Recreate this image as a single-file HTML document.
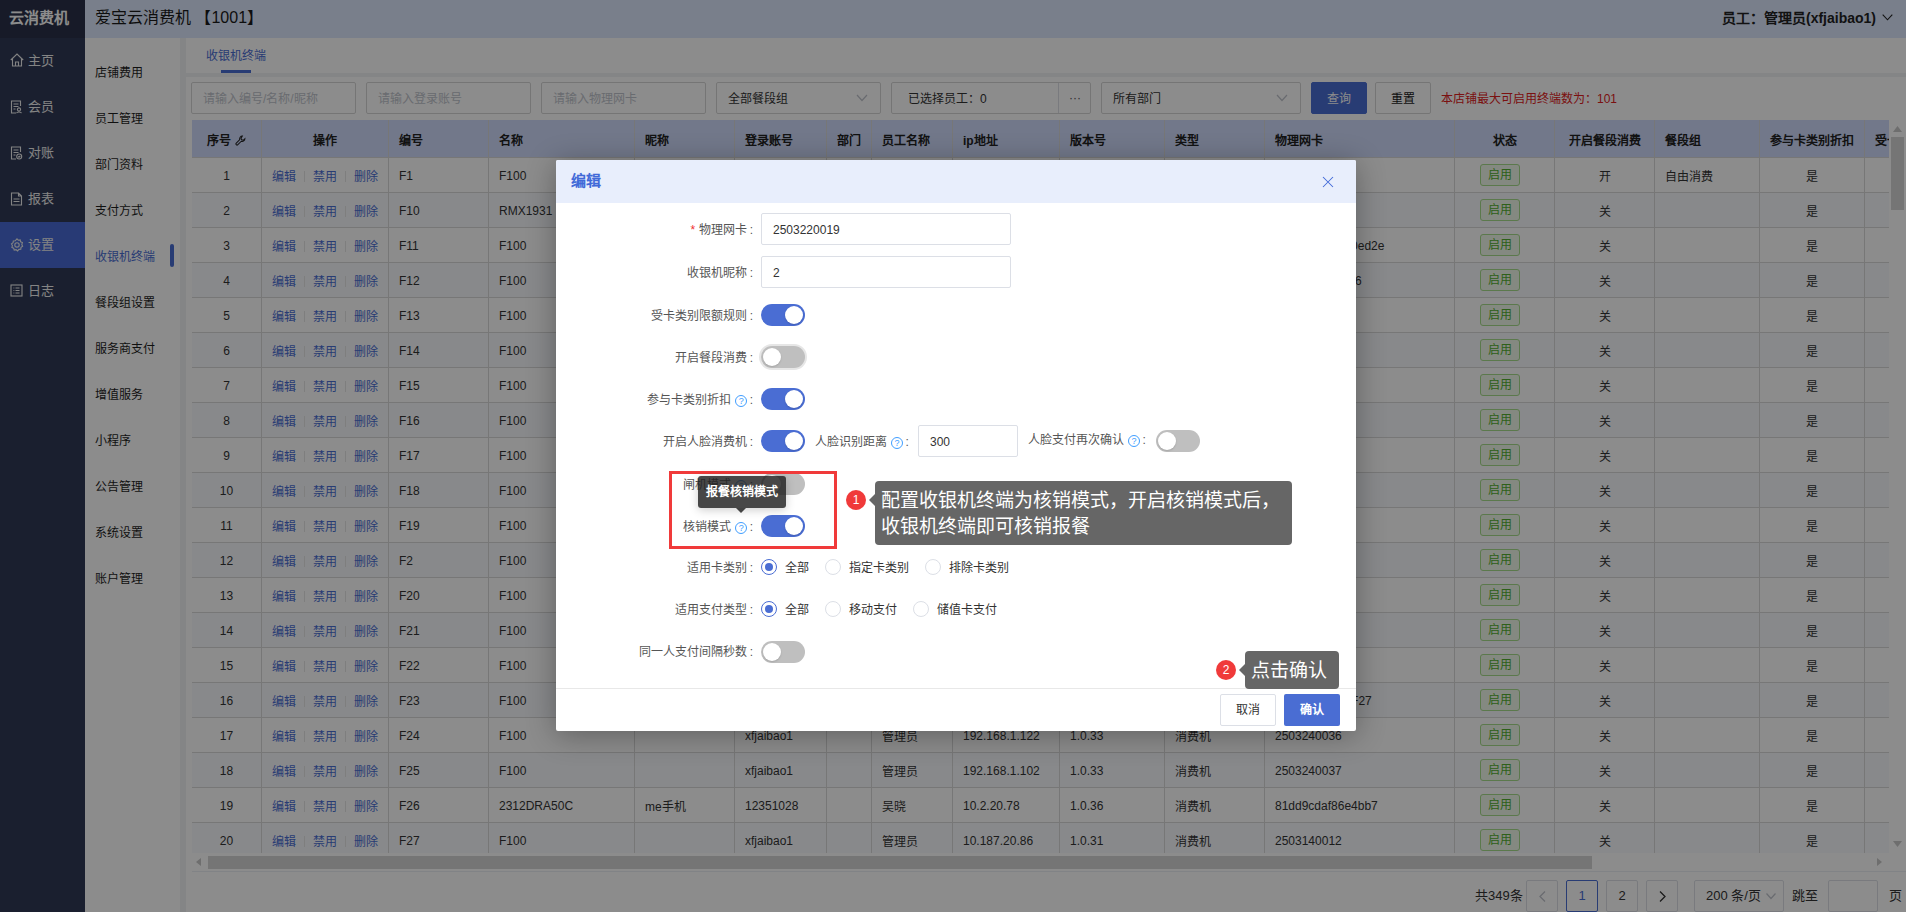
<!DOCTYPE html>
<html lang="zh-CN"><head><meta charset="utf-8">
<style>
*{box-sizing:border-box;margin:0;padding:0}
html,body{width:1906px;height:912px;overflow:hidden}
body{position:relative;font-family:"Liberation Sans",sans-serif;font-size:12px;color:#333;background:#fff}
.abs{position:absolute}
/* sidebar */
#side{position:absolute;left:0;top:0;width:85px;height:912px;background:#313a57}
#logo{position:absolute;left:0;top:0;width:85px;height:38px;background:#2a3149;color:#fff;font-size:15px;font-weight:bold;line-height:36px;padding-left:9px;letter-spacing:0}
.nav{position:absolute;left:0;width:85px;height:46px;color:#f0f0f0;font-size:13px;line-height:46px}
.nav svg{position:absolute;left:10px;top:16px}
.nav span{position:absolute;left:28px;top:0}
.nav.on{background:#496bd5}
/* header */
#hdr{position:absolute;left:85px;top:0;width:1821px;height:38px;background:#dce7fd}
#hdr .t{position:absolute;left:10px;top:0;line-height:36px;font-size:16px;color:#1a1a1a}
#hdr .u{position:absolute;right:30px;top:0;line-height:36px;font-size:14px;font-weight:bold;color:#222}
#hdr svg{position:absolute;left:1797px;top:14px}
/* submenu */
#sub{position:absolute;left:85px;top:38px;width:95px;height:874px;background:#fff}
.si{position:absolute;left:10px;margin-top:2px;font-size:12px;color:#1e1e1e;line-height:20px;height:20px}
.si.on{color:#4a6dd3}
#ind{position:absolute;left:85px;top:206px;width:4px;height:23px;border-radius:2px;background:#4a6dd3}
#sep{position:absolute;left:180px;top:38px;width:6px;height:874px;background:#f0f2f5}
/* content */
#tabs{position:absolute;left:186px;top:38px;width:1720px;height:35px;background:#fff}
#tabs .tt{position:absolute;left:20px;top:8px;font-size:12px;color:#4a6dd3;line-height:20px}
#tabs .ul{position:absolute;left:35px;top:32px;width:30px;height:3px;background:#4a6dd3}
#band{position:absolute;left:186px;top:73px;width:1720px;height:4px;background:#f0f2f5}
#panel{position:absolute;left:186px;top:77px;width:1720px;height:835px;background:#fff}
.inp{position:absolute;top:82px;height:32px;border:1px solid #d6d6d6;border-radius:2px;background:#fff;line-height:33px;padding-left:11px;font-size:12px;color:#c0c4cc}
.inp.v{color:#333}
.chev{position:absolute;right:12px;top:11px}
.btn{position:absolute;top:82px;height:32px;border-radius:2px;line-height:32px;text-align:center;font-size:12px}
#q{left:1311px;width:56px;background:#4a6dd3;color:#fff;border:1px solid #4a6dd3}
#r{left:1375px;width:56px;background:#fff;color:#1a1a1a;border:1px solid #d6d6d6}
#warn{position:absolute;left:1441px;top:89px;line-height:20px;font-size:12px;color:#e02020}
/* table */
#tbl{position:absolute;left:192px;top:120px;width:1697px;height:733px;overflow:hidden}
table{border-collapse:collapse;table-layout:fixed;width:1719.5px}
th{height:37px;padding-top:2px !important;background:#cfdafb;font-weight:bold;color:#222;font-size:12px;border:1px solid #d9d9d9;border-top:0;padding:0 10px;text-align:left;white-space:nowrap;overflow:hidden}
td{height:35px;border:1px solid #d9d9d9;padding:2px 10px 0;font-size:12px;color:#333;white-space:nowrap;overflow:hidden}
th:first-child,td:first-child{border-left:0}
.c{text-align:center}
tbody tr:nth-child(even) td{background:#f8fafe}
.op a{color:#4a6dd3;margin:0 0}
.op i{display:inline-block;width:1px;height:11px;background:#e6e6e6;margin:0 8px;vertical-align:-1px}
.tag{display:inline-block;position:relative;left:-5px;top:-1px;width:40px;height:22px;line-height:20px;border:1px solid #a6dc8a;background:#f0f9eb;color:#52b030;border-radius:3px;font-size:12px}
.wr{display:inline-block;vertical-align:-1px;margin-left:1px}
#hscroll{position:absolute;left:192px;top:855px;width:1697px;height:14px}
#hthumb{position:absolute;left:16px;top:1px;width:1384px;height:13px;background:#d6d6d6}
#hline{position:absolute;left:192px;top:871px;width:1714px;height:1px;background:#ebeef5}
#vscroll{position:absolute;left:1889px;top:121px;width:17px;height:733px}
#vthumb{position:absolute;left:2px;top:16px;width:13px;height:73px;background:#d6d6d6}
/* pagination */
.pg{position:absolute;top:880px;height:32px;border:1px solid #dcdfe6;border-radius:2px;background:#fff;line-height:30px;text-align:center;font-size:13px;color:#333}
.pt{position:absolute;top:886px;line-height:20px;font-size:13px;color:#333}
/* overlay */
#mask{position:absolute;left:0;top:0;width:1906px;height:912px;background:rgba(0,0,0,.45)}
/* modal */
#modal{position:absolute;left:556px;top:160px;width:800px;height:571px;background:#fff;border-radius:2px;box-shadow:0 4px 30px rgba(0,0,0,.32);overflow:hidden}
#mh{position:absolute;left:0;top:0;width:800px;height:43px;background:#e8eefc}
#mh .t{position:absolute;left:15px;top:11px;font-size:15px;font-weight:bold;color:#4169d8;line-height:20px}
#mh svg{position:absolute;left:766px;top:16px}
.lb{position:absolute;right:603px;margin-top:1px;font-size:12px;color:#555;line-height:20px;white-space:nowrap;text-align:right}
.lb b{color:#f03030;font-weight:normal;margin-right:4px}
.mi{position:absolute;height:32px;border:1px solid #dcdfe6;border-radius:2px;line-height:32px;padding-left:11px;font-size:12px;color:#333;background:#fff}
.sw{position:absolute;width:44px;height:22px;border-radius:11px;background:#bfbfbf}
.sw::after{content:"";position:absolute;top:2px;left:2px;width:18px;height:18px;border-radius:50%;background:#fff;box-shadow:0 1px 2px rgba(0,0,0,.15)}
.sw.on{background:#4a6dd3}
.sw.on::after{left:24px}
.sw.fo{box-shadow:0 0 0 2px #e6e6e6}
.qm{display:inline-block;width:12px;height:12px;border:1px solid #409eff;border-radius:50%;color:#409eff;font-size:9px;line-height:10px;text-align:center;vertical-align:0px;margin:0 0 0 4px}
.rd{position:absolute;width:16px;height:16px;border-radius:50%;border:1px solid #dcdfe6;background:#fff}
.rd.on{border-color:#4a6dd3}
.rd.on::after{content:"";position:absolute;left:3px;top:3px;width:8px;height:8px;border-radius:50%;background:#4a6dd3}
.rt{position:absolute;margin-top:1px;font-size:12px;color:#333;line-height:20px}
#mf{position:absolute;left:0;top:528px;width:800px;height:1px;background:#e8e8e8}
#cancel{position:absolute;left:664px;top:534px;width:56px;height:32px;border:1px solid #dcdfe6;border-radius:2px;line-height:30px;text-align:center;font-size:12px;color:#333;background:#fff}
#ok{position:absolute;left:728px;top:534px;width:56px;height:32px;border-radius:2px;line-height:32px;text-align:center;font-size:12px;color:#fff;background:#4a6dd3;font-weight:bold}
/* annotations */
#redbox{position:absolute;left:669px;top:471px;width:168px;height:78px;border:3px solid #f03a3a}
#tip1{position:absolute;left:698px;top:476px;width:88px;height:32px;background:rgba(30,30,30,.82);border-radius:3px;color:#fff;font-size:12px;font-weight:bold;line-height:33px;text-align:center;box-shadow:0 2px 10px rgba(0,0,0,.2)}
#tip1::after{content:"";position:absolute;left:38px;top:32px;border:5px solid transparent;border-top-color:rgba(30,30,30,.82)}
.badge{position:absolute;width:20px;height:20px;border-radius:50%;background:#f03a3a;color:#fff;font-size:12px;line-height:20px;text-align:center}
.gt{position:absolute;background:#666;border-radius:4px;color:#fff;font-size:19px;line-height:26px;white-space:nowrap}
.gt::before{content:"";position:absolute;left:-6px;top:13px;border:6px solid transparent;border-left:0;border-right-color:#666}
</style></head><body>

<div id="side">
  <div id="logo">云消费机</div>
  <div class="nav" style="top:38px"><svg width="14" height="14" viewBox="0 0 14 14" fill="none" stroke="#eee" stroke-width="1.1" style="top:15px"><path d="M0.8 7 L7 1 L13.2 7 M2.5 5.5 V13 H11.5 V5.5 M5.5 13 V9 H8.5 V13"/></svg><span>主页</span></div>
  <div class="nav" style="top:84px"><svg width="13" height="14" viewBox="0 0 13 14" fill="none" stroke="#eee" stroke-width="1.1"><path d="M10.5 6 V1 H1.5 V13 H6 M3.5 4 H8.5 M3.5 6.5 H8.5 M3.5 9 H5.5"/><circle cx="9" cy="9.5" r="1.6"/><path d="M6.5 13.2 C7 11.5 11 11.5 11.5 13.2"/></svg><span>会员</span></div>
  <div class="nav" style="top:130px"><svg width="13" height="14" viewBox="0 0 13 14" fill="none" stroke="#eee" stroke-width="1.1"><path d="M10.5 6 V1 H1.5 V13 H6 M3.5 4 H8.5 M3.5 6.5 H8.5 M3.5 9 H5.5"/><circle cx="9.2" cy="10.5" r="2.5"/><path d="M8.2 10.5 L9 11.3 L10.3 9.8"/></svg><span>对账</span></div>
  <div class="nav" style="top:176px"><svg width="13" height="14" viewBox="0 0 13 14" fill="none" stroke="#eee" stroke-width="1.1"><path d="M8.5 1 H1.5 V13 H11.5 V4 Z M8.5 1 V4 H11.5 M3.5 7 H9.5 M3.5 9.5 H9.5"/></svg><span>报表</span></div>
  <div class="nav on" style="top:222px"><svg width="14" height="14" viewBox="0 0 14 14" fill="none" stroke="#eee" stroke-width="1.1"><path d="M7 0.8 L8.3 2.2 L10.2 1.9 L10.6 3.8 L12.4 4.6 L11.8 6.5 L12.6 8.3 L11 9.4 L10.8 11.3 L8.9 11.4 L7.6 12.9 L6.1 11.7 L4.2 12.1 L3.7 10.2 L1.9 9.5 L2.4 7.6 L1.5 5.9 L3.1 4.8 L3.3 2.9 L5.2 2.8 Z"/><circle cx="7" cy="6.9" r="2.2"/></svg><span>设置</span></div>
  <div class="nav" style="top:268px"><svg width="13" height="13" viewBox="0 0 13 13" fill="none" stroke="#eee" stroke-width="1.1"><rect x="1" y="1" width="11" height="11"/><path d="M3.5 4 H4.3 M5.5 4 H9.5 M3.5 6.5 H4.3 M5.5 6.5 H9.5 M3.5 9 H4.3 M5.5 9 H9.5"/></svg><span>日志</span></div>
</div>

<div id="hdr">
  <div class="t">爱宝云消费机 【1001】</div>
  <div class="u">员工：管理员(xfjaibao1)</div>
  <svg width="11" height="7" viewBox="0 0 11 7" fill="none" stroke="#222" stroke-width="1.1"><path d="M0.7 0.7 L5.5 5.8 L10.3 0.7"/></svg>
</div>

<div id="sub">
  <div class="si" style="top:23px">店铺费用</div>
  <div class="si" style="top:69px">员工管理</div>
  <div class="si" style="top:115px">部门资料</div>
  <div class="si" style="top:161px">支付方式</div>
  <div class="si on" style="top:207px">收银机终端</div>
  <div class="si" style="top:253px">餐段组设置</div>
  <div class="si" style="top:299px">服务商支付</div>
  <div class="si" style="top:345px">增值服务</div>
  <div class="si" style="top:391px">小程序</div>
  <div class="si" style="top:437px">公告管理</div>
  <div class="si" style="top:483px">系统设置</div>
  <div class="si" style="top:529px">账户管理</div>
  <div id="ind"></div>
</div>
<div id="sep"></div>

<div id="tabs"><div class="tt">收银机终端</div><div class="ul"></div></div>
<div id="band"></div>
<div id="panel"></div>

<div class="inp" style="left:191px;width:165px">请输入编号/名称/昵称</div>
<div class="inp" style="left:366px;width:165px">请输入登录账号</div>
<div class="inp" style="left:541px;width:165px">请输入物理网卡</div>
<div class="inp v" style="left:716px;width:165px">全部餐段组<svg class="chev" width="12" height="8" viewBox="0 0 12 8" fill="none" stroke="#c0c4cc" stroke-width="1.2"><path d="M1 1 L6 6.5 L11 1"/></svg></div>
<div class="inp v" style="left:891px;width:200px;padding-left:16px">已选择员工：0<div style="position:absolute;left:166px;top:0;width:1px;height:30px;background:#dcdfe6"></div><div style="position:absolute;left:167px;top:-1px;width:32px;text-align:center;color:#555;font-size:12px">···</div></div>
<div class="inp v" style="left:1101px;width:200px">所有部门<svg class="chev" width="12" height="8" viewBox="0 0 12 8" fill="none" stroke="#c0c4cc" stroke-width="1.2"><path d="M1 1 L6 6.5 L11 1"/></svg></div>
<div class="btn" id="q">查询</div>
<div class="btn" id="r">重置</div>
<div id="warn">本店铺最大可启用终端数为：101</div>

<div id="tbl"><table><colgroup><col style="width:69.5px"><col style="width:127px"><col style="width:100px"><col style="width:146px"><col style="width:100px"><col style="width:92px"><col style="width:45px"><col style="width:81px"><col style="width:107px"><col style="width:105px"><col style="width:100px"><col style="width:190px"><col style="width:100px"><col style="width:100px"><col style="width:105px"><col style="width:105px"><col style="width:120px"></colgroup><thead><tr><th class="c">序号 <svg class="wr" width="11" height="11" viewBox="0 0 12 12"><path d="M8 1.2 A3 3 0 0 0 5.2 5.1 L1.4 8.9 A1.2 1.2 0 0 0 3.1 10.6 L6.9 6.8 A3 3 0 0 0 10.8 4 L9.3 5.5 L7.4 5.3 L6.5 3.8 L8 1.2 Z" fill="none" stroke="#222" stroke-width="1.1"/></svg></th><th class="c">操作</th><th class="l">编号</th><th class="l">名称</th><th class="l">昵称</th><th class="l">登录账号</th><th class="l">部门</th><th class="l">员工名称</th><th class="l">ip地址</th><th class="l">版本号</th><th class="l">类型</th><th class="l">物理网卡</th><th class="c">状态</th><th class="c">开启餐段消费</th><th class="l">餐段组</th><th class="c">参与卡类别折扣</th><th class="l">受卡类别限额规则</th></tr></thead><tbody>
<tr><td class="c">1</td><td class="c op"><a>编辑</a><i></i><a>禁用</a><i></i><a>删除</a></td><td>F1</td><td>F100</td><td></td><td>xfjaibao1</td><td></td><td>管理员</td><td>192.168.1.100</td><td>1.0.33</td><td>消费机</td><td>2503240000</td><td class="c"><span class="tag">启用</span></td><td class="c">开</td><td>自由消费</td><td class="c">是</td><td></td></tr>
<tr><td class="c">2</td><td class="c op"><a>编辑</a><i></i><a>禁用</a><i></i><a>删除</a></td><td>F10</td><td>RMX1931</td><td></td><td>xfjaibao1</td><td></td><td>管理员</td><td>192.168.1.100</td><td>1.0.33</td><td>消费机</td><td>2503240001</td><td class="c"><span class="tag">启用</span></td><td class="c">关</td><td></td><td class="c">是</td><td></td></tr>
<tr><td class="c">3</td><td class="c op"><a>编辑</a><i></i><a>禁用</a><i></i><a>删除</a></td><td>F11</td><td>F100</td><td></td><td>xfjaibao1</td><td></td><td>管理员</td><td>192.168.1.100</td><td>1.0.33</td><td>消费机</td><td>17f3a9c1b5d40ed2e</td><td class="c"><span class="tag">启用</span></td><td class="c">关</td><td></td><td class="c">是</td><td></td></tr>
<tr><td class="c">4</td><td class="c op"><a>编辑</a><i></i><a>禁用</a><i></i><a>删除</a></td><td>F12</td><td>F100</td><td></td><td>xfjaibao1</td><td></td><td>管理员</td><td>192.168.1.100</td><td>1.0.33</td><td>消费机</td><td>2503220000016</td><td class="c"><span class="tag">启用</span></td><td class="c">关</td><td></td><td class="c">是</td><td></td></tr>
<tr><td class="c">5</td><td class="c op"><a>编辑</a><i></i><a>禁用</a><i></i><a>删除</a></td><td>F13</td><td>F100</td><td></td><td>xfjaibao1</td><td></td><td>管理员</td><td>192.168.1.100</td><td>1.0.33</td><td>消费机</td><td>2503240004</td><td class="c"><span class="tag">启用</span></td><td class="c">关</td><td></td><td class="c">是</td><td></td></tr>
<tr><td class="c">6</td><td class="c op"><a>编辑</a><i></i><a>禁用</a><i></i><a>删除</a></td><td>F14</td><td>F100</td><td></td><td>xfjaibao1</td><td></td><td>管理员</td><td>192.168.1.100</td><td>1.0.33</td><td>消费机</td><td>2503240005</td><td class="c"><span class="tag">启用</span></td><td class="c">关</td><td></td><td class="c">是</td><td></td></tr>
<tr><td class="c">7</td><td class="c op"><a>编辑</a><i></i><a>禁用</a><i></i><a>删除</a></td><td>F15</td><td>F100</td><td></td><td>xfjaibao1</td><td></td><td>管理员</td><td>192.168.1.100</td><td>1.0.33</td><td>消费机</td><td>2503240006</td><td class="c"><span class="tag">启用</span></td><td class="c">关</td><td></td><td class="c">是</td><td></td></tr>
<tr><td class="c">8</td><td class="c op"><a>编辑</a><i></i><a>禁用</a><i></i><a>删除</a></td><td>F16</td><td>F100</td><td></td><td>xfjaibao1</td><td></td><td>管理员</td><td>192.168.1.100</td><td>1.0.33</td><td>消费机</td><td>2503240007</td><td class="c"><span class="tag">启用</span></td><td class="c">关</td><td></td><td class="c">是</td><td></td></tr>
<tr><td class="c">9</td><td class="c op"><a>编辑</a><i></i><a>禁用</a><i></i><a>删除</a></td><td>F17</td><td>F100</td><td></td><td>xfjaibao1</td><td></td><td>管理员</td><td>192.168.1.100</td><td>1.0.33</td><td>消费机</td><td>2503240008</td><td class="c"><span class="tag">启用</span></td><td class="c">关</td><td></td><td class="c">是</td><td></td></tr>
<tr><td class="c">10</td><td class="c op"><a>编辑</a><i></i><a>禁用</a><i></i><a>删除</a></td><td>F18</td><td>F100</td><td></td><td>xfjaibao1</td><td></td><td>管理员</td><td>192.168.1.100</td><td>1.0.33</td><td>消费机</td><td>2503240009</td><td class="c"><span class="tag">启用</span></td><td class="c">关</td><td></td><td class="c">是</td><td></td></tr>
<tr><td class="c">11</td><td class="c op"><a>编辑</a><i></i><a>禁用</a><i></i><a>删除</a></td><td>F19</td><td>F100</td><td></td><td>xfjaibao1</td><td></td><td>管理员</td><td>192.168.1.100</td><td>1.0.33</td><td>消费机</td><td>2503240010</td><td class="c"><span class="tag">启用</span></td><td class="c">关</td><td></td><td class="c">是</td><td></td></tr>
<tr><td class="c">12</td><td class="c op"><a>编辑</a><i></i><a>禁用</a><i></i><a>删除</a></td><td>F2</td><td>F100</td><td></td><td>xfjaibao1</td><td></td><td>管理员</td><td>192.168.1.100</td><td>1.0.33</td><td>消费机</td><td>2503240011</td><td class="c"><span class="tag">启用</span></td><td class="c">关</td><td></td><td class="c">是</td><td></td></tr>
<tr><td class="c">13</td><td class="c op"><a>编辑</a><i></i><a>禁用</a><i></i><a>删除</a></td><td>F20</td><td>F100</td><td></td><td>xfjaibao1</td><td></td><td>管理员</td><td>192.168.1.100</td><td>1.0.33</td><td>消费机</td><td>2503240012</td><td class="c"><span class="tag">启用</span></td><td class="c">关</td><td></td><td class="c">是</td><td></td></tr>
<tr><td class="c">14</td><td class="c op"><a>编辑</a><i></i><a>禁用</a><i></i><a>删除</a></td><td>F21</td><td>F100</td><td></td><td>xfjaibao1</td><td></td><td>管理员</td><td>192.168.1.100</td><td>1.0.33</td><td>消费机</td><td>2503240013</td><td class="c"><span class="tag">启用</span></td><td class="c">关</td><td></td><td class="c">是</td><td></td></tr>
<tr><td class="c">15</td><td class="c op"><a>编辑</a><i></i><a>禁用</a><i></i><a>删除</a></td><td>F22</td><td>F100</td><td></td><td>xfjaibao1</td><td></td><td>管理员</td><td>192.168.1.100</td><td>1.0.33</td><td>消费机</td><td>2503240014</td><td class="c"><span class="tag">启用</span></td><td class="c">关</td><td></td><td class="c">是</td><td></td></tr>
<tr><td class="c">16</td><td class="c op"><a>编辑</a><i></i><a>禁用</a><i></i><a>删除</a></td><td>F23</td><td>F100</td><td></td><td>xfjaibao1</td><td></td><td>管理员</td><td>192.168.1.100</td><td>1.0.33</td><td>消费机</td><td>6c4f1ab0e9a1F27</td><td class="c"><span class="tag">启用</span></td><td class="c">关</td><td></td><td class="c">是</td><td></td></tr>
<tr><td class="c">17</td><td class="c op"><a>编辑</a><i></i><a>禁用</a><i></i><a>删除</a></td><td>F24</td><td>F100</td><td></td><td>xfjaibao1</td><td></td><td>管理员</td><td>192.168.1.122</td><td>1.0.33</td><td>消费机</td><td>2503240036</td><td class="c"><span class="tag">启用</span></td><td class="c">关</td><td></td><td class="c">是</td><td></td></tr>
<tr><td class="c">18</td><td class="c op"><a>编辑</a><i></i><a>禁用</a><i></i><a>删除</a></td><td>F25</td><td>F100</td><td></td><td>xfjaibao1</td><td></td><td>管理员</td><td>192.168.1.102</td><td>1.0.33</td><td>消费机</td><td>2503240037</td><td class="c"><span class="tag">启用</span></td><td class="c">关</td><td></td><td class="c">是</td><td></td></tr>
<tr><td class="c">19</td><td class="c op"><a>编辑</a><i></i><a>禁用</a><i></i><a>删除</a></td><td>F26</td><td>2312DRA50C</td><td>me手机</td><td>12351028</td><td></td><td>吴晓</td><td>10.2.20.78</td><td>1.0.36</td><td>消费机</td><td>81dd9cdaf86e4bb7</td><td class="c"><span class="tag">启用</span></td><td class="c">关</td><td></td><td class="c">是</td><td></td></tr>
<tr><td class="c">20</td><td class="c op"><a>编辑</a><i></i><a>禁用</a><i></i><a>删除</a></td><td>F27</td><td>F100</td><td></td><td>xfjaibao1</td><td></td><td>管理员</td><td>10.187.20.86</td><td>1.0.31</td><td>消费机</td><td>2503140012</td><td class="c"><span class="tag">启用</span></td><td class="c">关</td><td></td><td class="c">是</td><td></td></tr>
</tbody></table></div>
<div id="hscroll"><div id="hthumb"></div>
<svg style="position:absolute;left:4px;top:3px" width="6" height="8" viewBox="0 0 6 8"><path d="M5 0 L0 4 L5 8 Z" fill="#c8c8c8"/></svg>
<svg style="position:absolute;left:1684px;top:3px" width="6" height="8" viewBox="0 0 6 8"><path d="M1 0 L6 4 L1 8 Z" fill="#c8c8c8"/></svg>
</div>
<div id="hline"></div>
<div id="vscroll"><div id="vthumb"></div>
<svg style="position:absolute;left:4px;top:5px" width="9" height="6" viewBox="0 0 9 6"><path d="M0 6 L4.5 0 L9 6 Z" fill="#c8c8c8"/></svg>
<svg style="position:absolute;left:4px;top:720px" width="9" height="6" viewBox="0 0 9 6"><path d="M0 0 L4.5 6 L9 0 Z" fill="#c8c8c8"/></svg>
</div>

<div class="pt" style="left:1475px">共349条</div>
<div class="pg" style="left:1526px;width:32px"><svg style="margin-top:10px" width="7" height="11" viewBox="0 0 7 11" fill="none" stroke="#c0c4cc" stroke-width="1.3"><path d="M6 0.5 L1 5.5 L6 10.5"/></svg></div>
<div class="pg" style="left:1566px;width:32px;border-color:#4a6dd3;color:#4a6dd3">1</div>
<div class="pg" style="left:1606px;width:32px">2</div>
<div class="pg" style="left:1646px;width:32px"><svg style="margin-top:10px" width="7" height="11" viewBox="0 0 7 11" fill="none" stroke="#333" stroke-width="1.3"><path d="M1 0.5 L6 5.5 L1 10.5"/></svg></div>
<div class="pg" style="left:1694px;width:90px;text-align:left;padding-left:11px">200 条/页<svg style="position:absolute;left:71px;top:12px" width="10" height="7" viewBox="0 0 10 7" fill="none" stroke="#c0c4cc" stroke-width="1.2"><path d="M0.5 0.5 L5 5.5 L9.5 0.5"/></svg></div>
<div class="pt" style="left:1792px">跳至</div>
<div class="pg" style="left:1828px;width:50px"></div>
<div class="pt" style="left:1889px">页</div>

<div id="mask"></div>

<div id="modal">
  <div id="mh"><div class="t">编辑</div><svg width="12" height="12" viewBox="0 0 12 12" fill="none" stroke="#4169d8" stroke-width="1.05"><path d="M1 1 L11 11 M11 1 L1 11"/></svg></div>

  <div class="lb" style="top:59px"><b>*</b>物理网卡 :</div>
  <div class="mi" style="left:205px;top:53px;width:250px">2503220019</div>
  <div class="lb" style="top:102px">收银机昵称 :</div>
  <div class="mi" style="left:205px;top:96px;width:250px">2</div>
  <div class="lb" style="top:145px">受卡类别限额规则 :</div>
  <div class="sw on" style="left:205px;top:144px"></div>
  <div class="lb" style="top:187px">开启餐段消费 :</div>
  <div class="sw fo" style="left:205px;top:186px"></div>
  <div class="lb" style="top:229px">参与卡类别折扣<span class="qm">?</span> :</div>
  <div class="sw on" style="left:205px;top:228px"></div>
  <div class="lb" style="top:271px">开启人脸消费机 :</div>
  <div class="sw on" style="left:205px;top:270px"></div>
  <div class="rt" style="left:259px;top:271px;color:#555">人脸识别距离<span class="qm">?</span> :</div>
  <div class="mi" style="left:362px;top:265px;width:100px">300</div>
  <div class="rt" style="left:472px;top:269px;color:#555">人脸支付再次确认<span class="qm">?</span> :</div>
  <div class="sw" style="left:600px;top:270px"></div>
  <div class="lb" style="top:314px">闸机模式<span class="qm">?</span> :</div>
  <div class="sw" style="left:205px;top:313px"></div>
  <div class="lb" style="top:356px">核销模式<span class="qm">?</span> :</div>
  <div class="sw on" style="left:205px;top:355px"></div>
  <div class="lb" style="top:397px">适用卡类别 :</div>
  <div class="rd on" style="left:205px;top:399px"></div><div class="rt" style="left:229px;top:397px">全部</div>
  <div class="rd" style="left:269px;top:399px"></div><div class="rt" style="left:293px;top:397px">指定卡类别</div>
  <div class="rd" style="left:369px;top:399px"></div><div class="rt" style="left:393px;top:397px">排除卡类别</div>
  <div class="lb" style="top:439px">适用支付类型 :</div>
  <div class="rd on" style="left:205px;top:441px"></div><div class="rt" style="left:229px;top:439px">全部</div>
  <div class="rd" style="left:269px;top:441px"></div><div class="rt" style="left:293px;top:439px">移动支付</div>
  <div class="rd" style="left:357px;top:441px"></div><div class="rt" style="left:381px;top:439px">储值卡支付</div>
  <div class="lb" style="top:481px">同一人支付间隔秒数 :</div>
  <div class="sw" style="left:205px;top:481px"></div>

  <div id="mf"></div>
  <div id="cancel">取消</div>
  <div id="ok">确认</div>
</div>

<div id="redbox"></div>
<div id="tip1">报餐核销模式</div>
<div class="badge" style="left:846px;top:490px">1</div>
<div class="gt" style="left:875px;top:481px;width:417px;height:64px;padding:7px 0 0 6px">配置收银机终端为核销模式，开启核销模式后，<br>收银机终端即可核销报餐</div>
<div class="badge" style="left:1216px;top:660px">2</div>
<div class="gt" style="left:1245px;top:651px;width:94px;height:38px;padding:7px 0 0 6px">点击确认</div>

</body></html>
